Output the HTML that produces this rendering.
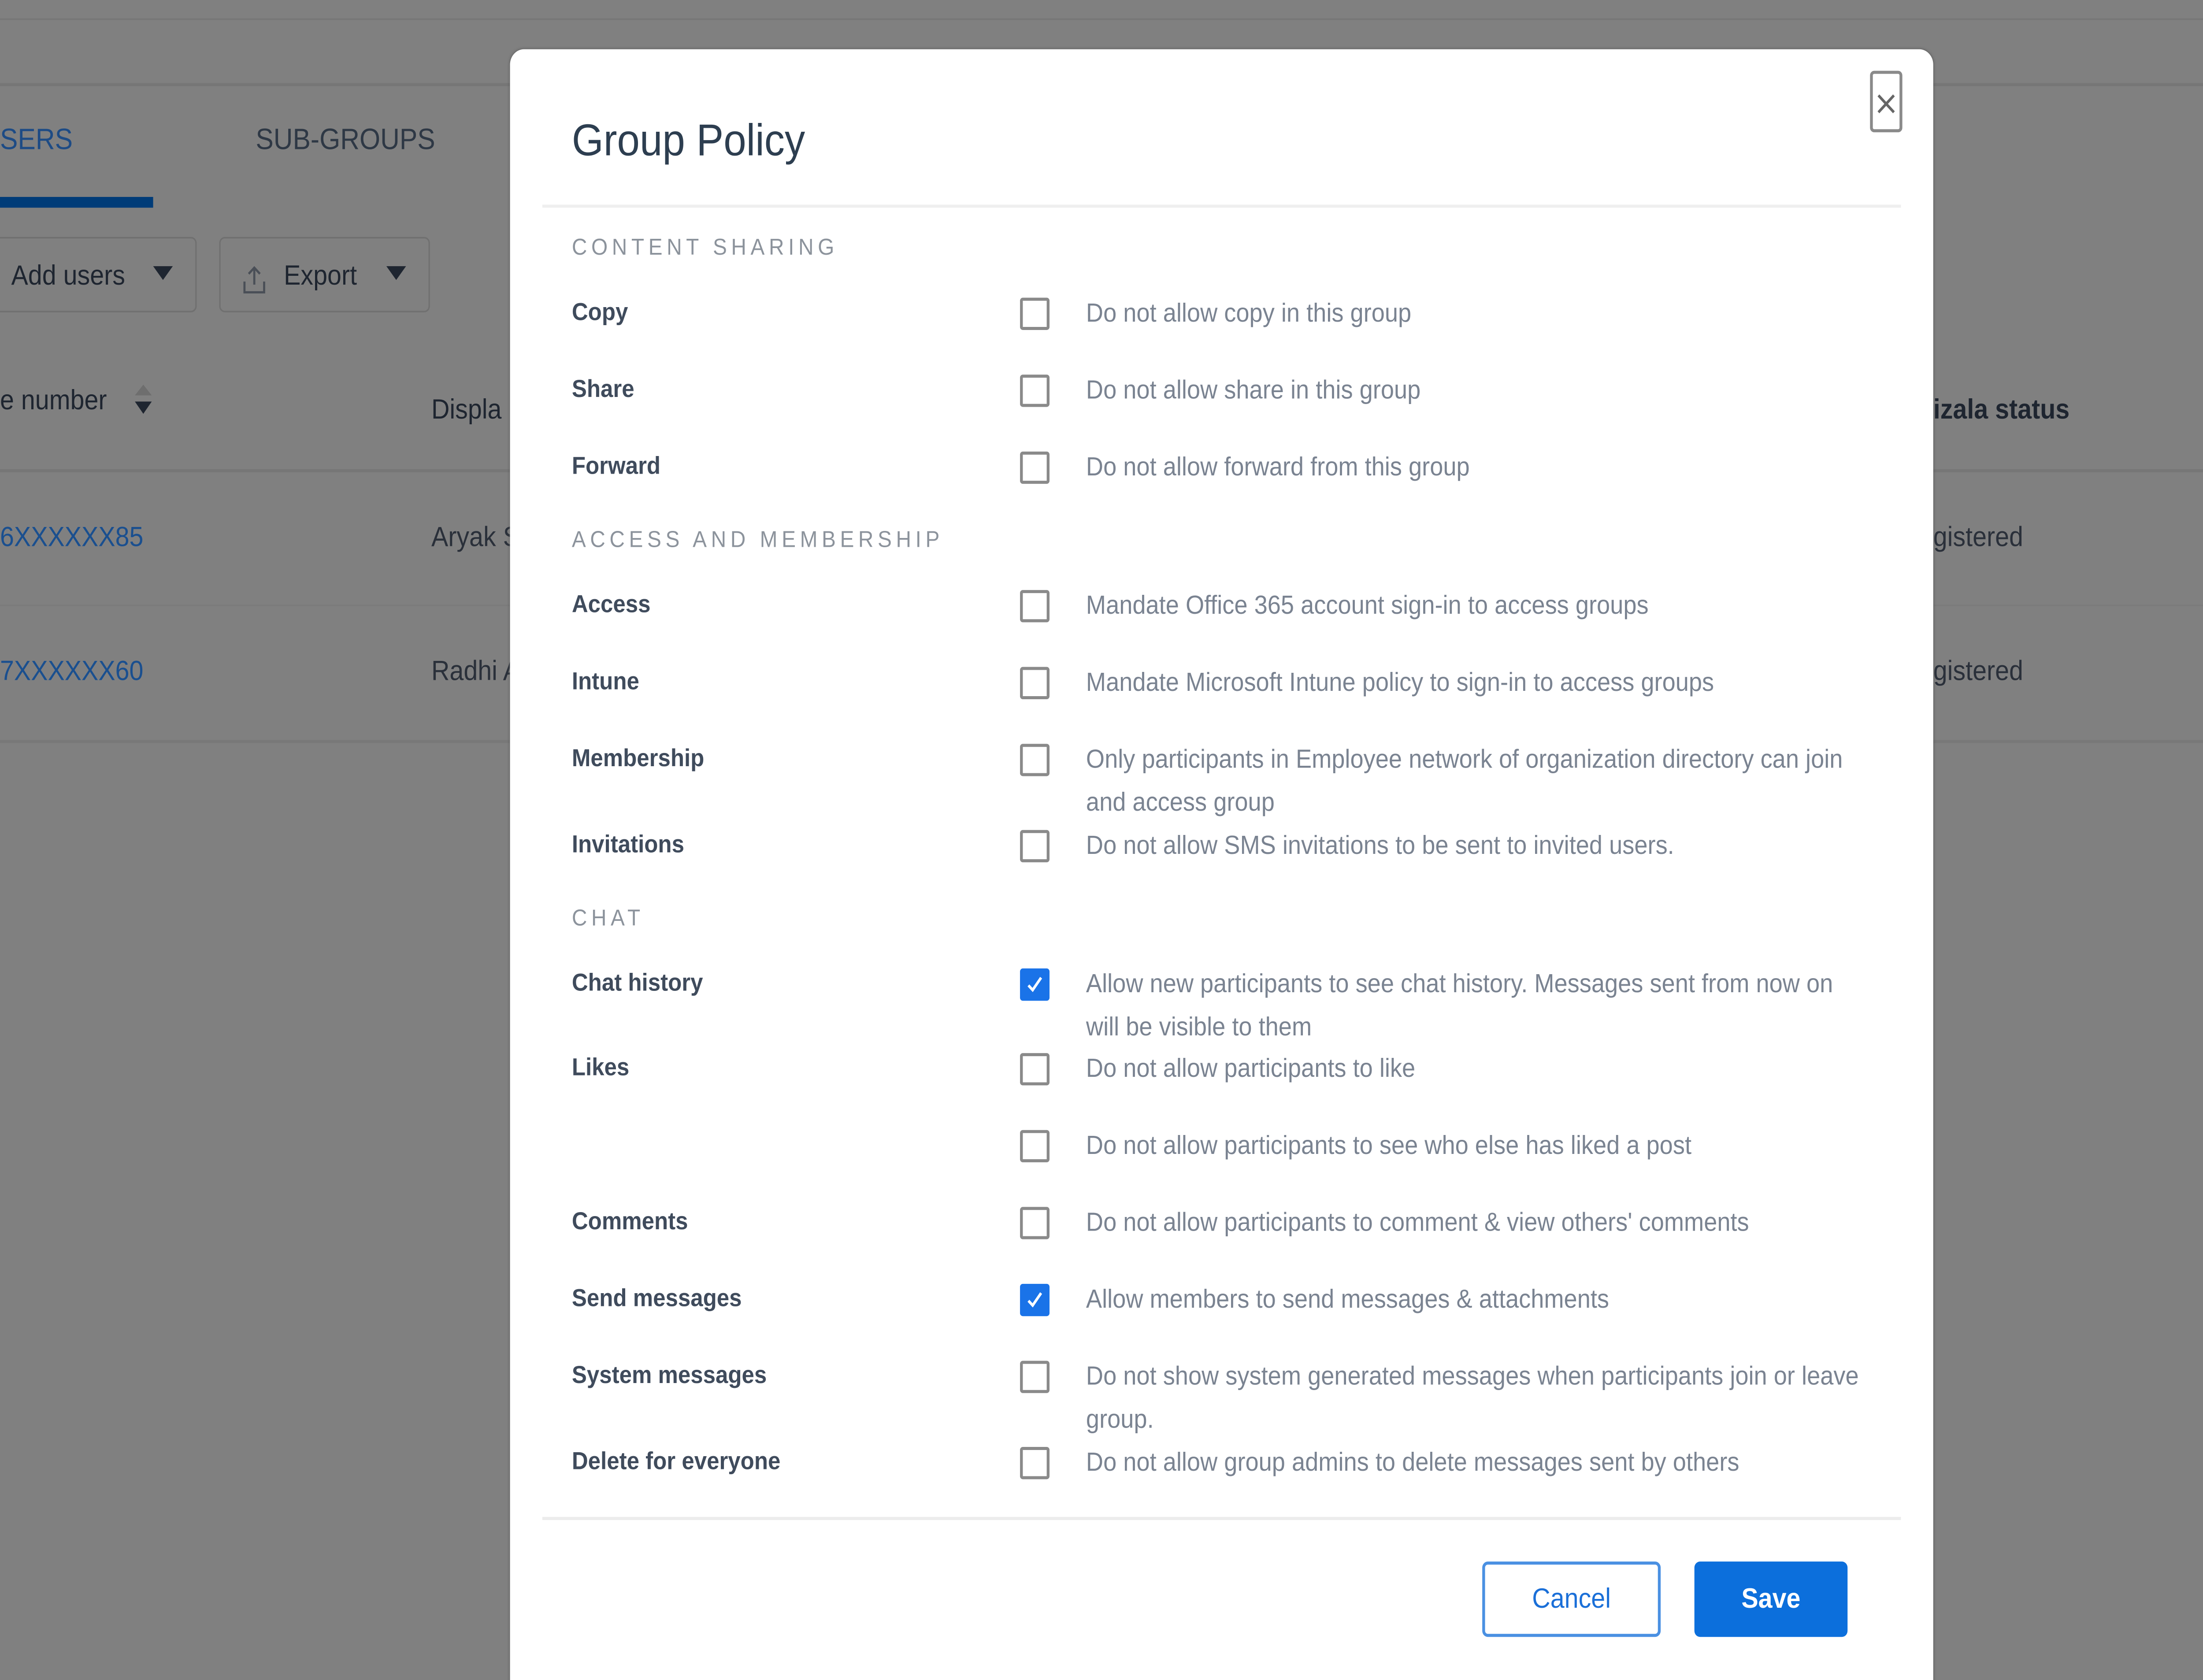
<!DOCTYPE html>
<html><head><meta charset="utf-8"><style>
html,body{margin:0;padding:0;width:100%;height:100%;overflow:hidden;background:#808080}
svg.root{display:block;width:100vw;height:100vh}
#s{position:relative;width:1568px;height:1092px;font-family:"Liberation Sans",sans-serif;background:#808080;overflow:hidden}
.a{position:absolute;white-space:nowrap}
.hl{position:absolute;height:1px;background:#767676}
.lb{position:absolute;left:407px;font-size:16px;font-weight:bold;color:#3f4b5c;transform:translateY(-50%);white-space:nowrap}
.ds{position:absolute;left:773px;font-size:17px;color:#7a8391;transform:translateY(-50%);white-space:nowrap}
.cb{position:absolute;left:726px;width:17px;height:17px;border:2px solid #8a8a8a;border-radius:2px;transform:translateY(-50%);background:#fff}
.cb.on{background:#1a73e8;border-color:#1a73e8}
.sh{position:absolute;left:407px;font-size:15px;letter-spacing:3px;color:#8c939c;transform:translateY(-50%)}
</style></head><body>
<svg class="root" viewBox="0 0 1568 1092" preserveAspectRatio="none" xmlns="http://www.w3.org/2000/svg">
<foreignObject x="0" y="0" width="1568" height="1092">
<div xmlns="http://www.w3.org/1999/xhtml" id="s">
<div class="hl" style="left:0;top:12px;width:1568px"></div>
<div class="hl" style="left:0;top:54px;width:1568px;height:2px"></div>
<div class="a" style="left:0;top:81px;font-size:19px;color:#1d4b85">SERS</div>
<div class="a" style="left:0;top:128px;width:109px;height:7px;background:#003c78"></div>
<div class="a" style="left:182px;top:81px;font-size:19px;color:#2e3845">SUB-GROUPS</div>
<div class="a" style="left:-10px;top:154px;width:150px;height:49px;border:1px solid #707070;border-radius:4px;box-sizing:border-box"></div>
<div class="a" style="left:8px;top:169px;font-size:18px;color:#1e2530">Add users</div>
<div class="a" style="left:109px;top:173px;border-left:7px solid transparent;border-right:7px solid transparent;border-top:9px solid #1e2530"></div>
<div class="a" style="left:156px;top:154px;width:150px;height:49px;border:1px solid #707070;border-radius:4px;box-sizing:border-box"></div>
<svg class="a" style="left:172px;top:172px" width="18" height="20" viewBox="0 0 18 20"><path d="M9 2v11M5 6l4-4 4 4M2 11v7h14v-7" fill="none" stroke="#4a4f57" stroke-width="1.5"/></svg>
<div class="a" style="left:202px;top:169px;font-size:18px;color:#1e2530">Export</div>
<div class="a" style="left:275px;top:173px;border-left:7px solid transparent;border-right:7px solid transparent;border-top:9px solid #1e2530"></div>
<div class="a" style="left:0;top:250px;font-size:18px;color:#1e2530">e number</div>
<div class="a" style="left:96px;top:250px;border-left:6px solid transparent;border-right:6px solid transparent;border-bottom:7px solid #6e6e6e"></div>
<div class="a" style="left:96px;top:261px;border-left:6px solid transparent;border-right:6px solid transparent;border-top:8px solid #1e2530"></div>
<div class="a" style="left:307px;top:256px;font-size:18px;color:#1e2530">Displa</div>
<div class="a" style="left:1376px;top:256px;font-size:18px;font-weight:bold;color:#1e2530">izala status</div>
<div class="hl" style="left:0;top:305px;width:1568px;height:2px"></div>
<div class="a" style="left:0;top:339px;font-size:18px;color:#1a4f8f">6XXXXXX85</div>
<div class="a" style="left:307px;top:339px;font-size:18px;color:#2a303a">Aryak S</div>
<div class="a" style="left:1376px;top:339px;font-size:18px;color:#2a303a">gistered</div>
<div class="hl" style="left:0;top:393px;width:1568px;background:#7b7b7b"></div>
<div class="a" style="left:0;top:426px;font-size:18px;color:#1a4f8f">7XXXXXX60</div>
<div class="a" style="left:307px;top:426px;font-size:18px;color:#2a303a">Radhi A</div>
<div class="a" style="left:1376px;top:426px;font-size:18px;color:#2a303a">gistered</div>
<div class="hl" style="left:0;top:481px;width:1568px;height:2px;background:#787878"></div>
<div class="a" style="left:363px;top:32px;width:1013px;height:1070px;background:#fff;border-radius:10px 10px 0 0;box-shadow:0 0 2px #555"></div>
<div class="a" style="left:407px;top:76px;font-size:29px;color:#2d3e50">Group Policy</div>
<div class="a" style="left:1331px;top:46px;width:23px;height:40px;border:2px solid #8a8a8a;border-radius:3px;box-sizing:border-box"></div>
<svg class="a" style="left:1336px;top:61px" width="13" height="13" viewBox="0 0 13 13"><path d="M1 1l11 11M12 1L1 12" stroke="#666" stroke-width="1.8"/></svg>
<div class="a" style="left:386px;top:133px;width:967px;height:2px;background:#efefef"></div>
<div class="sh" style="top:161px">CONTENT SHARING</div>
<div class="lb" style="top:204px">Copy</div><div class="cb" style="top:204px"></div><div class="ds" style="top:204px">Do not allow copy in this group</div>
<div class="lb" style="top:254px">Share</div><div class="cb" style="top:254px"></div><div class="ds" style="top:254px">Do not allow share in this group</div>
<div class="lb" style="top:304px">Forward</div><div class="cb" style="top:304px"></div><div class="ds" style="top:304px">Do not allow forward from this group</div>
<div class="sh" style="top:351px">ACCESS AND MEMBERSHIP</div>
<div class="lb" style="top:394px">Access</div><div class="cb" style="top:394px"></div><div class="ds" style="top:394px">Mandate Office 365 account sign-in to access groups</div>
<div class="lb" style="top:444px">Intune</div><div class="cb" style="top:444px"></div><div class="ds" style="top:444px">Mandate Microsoft Intune policy to sign-in to access groups</div>
<div class="lb" style="top:494px">Membership</div><div class="cb" style="top:494px"></div><div class="ds" style="top:494px">Only participants in Employee network of organization directory can join</div><div class="ds" style="top:522px">and access group</div>
<div class="lb" style="top:550px">Invitations</div><div class="cb" style="top:550px"></div><div class="ds" style="top:550px">Do not allow SMS invitations to be sent to invited users.</div>
<div class="sh" style="top:597px">CHAT</div>
<div class="lb" style="top:640px">Chat history</div><div class="cb on" style="top:640px"><svg width="17" height="17" viewBox="0 0 17 17" style="position:absolute;left:0;top:0"><path d="M4 9l3 3 6-8" fill="none" stroke="#fff" stroke-width="1.8"/></svg></div><div class="ds" style="top:640px">Allow new participants to see chat history. Messages sent from now on</div><div class="ds" style="top:668px">will be visible to them</div>
<div class="lb" style="top:695px">Likes</div><div class="cb" style="top:695px"></div><div class="ds" style="top:695px">Do not allow participants to like</div>
<div class="cb" style="top:745px"></div><div class="ds" style="top:745px">Do not allow participants to see who else has liked a post</div>
<div class="lb" style="top:795px">Comments</div><div class="cb" style="top:795px"></div><div class="ds" style="top:795px">Do not allow participants to comment &amp; view others' comments</div>
<div class="lb" style="top:845px">Send messages</div><div class="cb on" style="top:845px"><svg width="17" height="17" viewBox="0 0 17 17" style="position:absolute;left:0;top:0"><path d="M4 9l3 3 6-8" fill="none" stroke="#fff" stroke-width="1.8"/></svg></div><div class="ds" style="top:845px">Allow members to send messages &amp; attachments</div>
<div class="lb" style="top:895px">System messages</div><div class="cb" style="top:895px"></div><div class="ds" style="top:895px">Do not show system generated messages when participants join or leave</div><div class="ds" style="top:923px">group.</div>
<div class="lb" style="top:951px">Delete for everyone</div><div class="cb" style="top:951px"></div><div class="ds" style="top:951px">Do not allow group admins to delete messages sent by others</div>
<div class="a" style="left:386px;top:986px;width:967px;height:2px;background:#ececec"></div>
<div class="a" style="left:1055px;top:1015px;width:127px;height:49px;border:2px solid #4a90e2;border-radius:4px;box-sizing:border-box;color:#1a6fd8;font-size:18px;text-align:center;line-height:45px">Cancel</div>
<div class="a" style="left:1206px;top:1015px;width:109px;height:49px;background:#0c6fdc;border-radius:4px;color:#fff;font-size:18px;font-weight:bold;text-align:center;line-height:49px">Save</div>
</div>
</foreignObject>
</svg>
</body></html>
